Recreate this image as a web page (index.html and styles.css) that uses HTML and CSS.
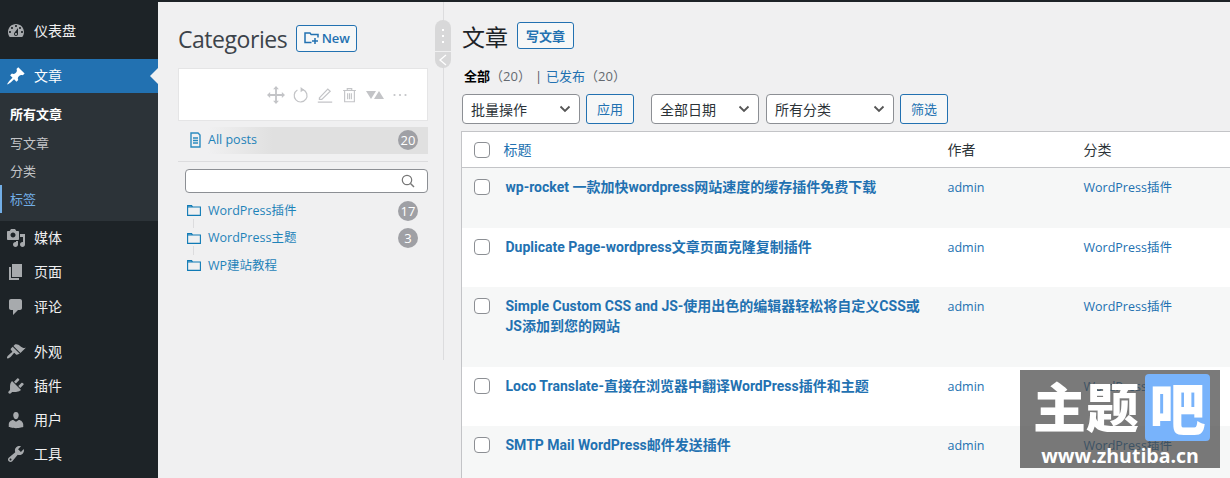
FILE: index.html
```html
<!DOCTYPE html>
<html lang="zh-CN">
<head>
<meta charset="utf-8">
<title>文章</title>
<link rel="stylesheet" href="styles.css">
</head>
<body>
<div class="layout">
  <nav class="sidebar">
    <a class="menu-item"><svg class="mi" viewBox="0 0 20 20"><path d="M3.76 16h12.48c1.1-1.37 1.76-3.11 1.76-5 0-4.42-3.58-8-8-8s-8 3.58-8 8c0 1.89.66 3.63 1.76 5zM10 4c.55 0 1 .45 1 1s-.45 1-1 1-1-.45-1-1 .45-1 1-1zM6 6c.55 0 1 .45 1 1s-.45 1-1 1-1-.45-1-1 .45-1 1-1zm8 0c.55 0 1 .45 1 1s-.45 1-1 1-1-.45-1-1 .45-1 1-1zm-5.37 5.55L12 7v6c0 1.1-.9 2-2 2s-2-.9-2-2c0-.57.24-1.08.63-1.45zM4 10c.55 0 1 .45 1 1s-.45 1-1 1-1-.45-1-1 .45-1 1-1zm12 0c.55 0 1 .45 1 1s-.45 1-1 1-1-.45-1-1 .45-1 1-1zm-5 3c0-.55-.45-1-1-1s-1 .45-1 1 .45 1 1 1 1-.45 1-1z"/></svg>仪表盘</a>
    <a class="menu-item active gap"><svg class="mi" viewBox="0 0 20 20"><path d="M10.44 3.02l1.82-1.82 6.36 6.35-1.83 1.82c-1.05-.68-2.48-.57-3.41.36l-.75.75c-.92.93-1.04 2.35-.35 3.41l-1.83 1.82-2.41-2.41-2.8 2.79c-.42.42-3.38 2.71-3.8 2.29s1.86-3.39 2.28-3.81l2.79-2.79L4.1 9.36l1.83-1.82c1.05.69 2.48.57 3.4-.36l.75-.75c.93-.92 1.05-2.35.36-3.41z"/></svg>文章</a>
    <ul class="submenu">
      <li class="sub-current">所有文章</li>
      <li>写文章</li>
      <li>分类</li>
      <li class="sub-marked">标签</li>
    </ul>
    <a class="menu-item"><svg class="mi" viewBox="0 0 20 20"><path d="M13 11V4c0-.55-.45-1-1-1h-1.67L9 1H5L3.67 3H2c-.55 0-1 .45-1 1v7c0 .55.45 1 1 1h10c.55 0 1-.45 1-1zM7 4.5c1.38 0 2.5 1.12 2.5 2.5S8.38 9.5 7 9.5 4.5 8.38 4.5 7 5.62 4.5 7 4.5zM14 6h5v10.5c0 1.38-1.12 2.5-2.5 2.5S14 17.88 14 16.5s1.12-2.5 2.5-2.5c.17 0 .34.02.5.05V9h-3V6zm-4 8.05V13h2v3.5c0 1.38-1.12 2.5-2.5 2.5S7 17.88 7 16.5 8.12 14 9.5 14c.17 0 .34.02.5.05z"/></svg>媒体</a>
    <a class="menu-item"><svg class="mi" viewBox="0 0 20 20"><path d="M6 15V2h10v13H6zm-1 1h8v2H3V5h2v11z"/></svg>页面</a>
    <a class="menu-item nudge"><svg class="mi" viewBox="0 0 20 20"><path d="M5 2h9c1.1 0 2 .9 2 2v7c0 1.1-.9 2-2 2h-2l-5 5v-5H5c-1.1 0-2-.9-2-2V4c0-1.1.9-2 2-2z"/></svg>评论</a>
    <a class="menu-item gap"><svg class="mi" viewBox="0 0 20 20"><path d="M14.48 11.06L7.41 3.99l1.5-1.5c.5-.56 2.3-.47 3.51.32 1.21.8 1.43 1.28 2.91 2.1 1.18.64 2.45 1.26 4.45.85zm-.71.71L6.7 4.7 4.93 6.47c-.39.39-.39 1.02 0 1.41l1.06 1.06c.39.39.39 1.03 0 1.42-.6.6-1.43 1.11-2.21 1.69-.35.26-.7.53-1.01.84C1.43 13.71.5 15.5 1.21 16.19c.7.71 2.48-.22 3.83-1.57.31-.31.58-.66.84-1.01.58-.78 1.09-1.61 1.69-2.21.39-.39 1.03-.39 1.42 0l1.06 1.06c.39.39 1.02.39 1.41 0z"/></svg>外观</a>
    <a class="menu-item"><svg class="mi" viewBox="0 0 20 20"><path d="M13.11 4.36L9.87 7.6 8 5.73l3.24-3.24c.35-.34 1.05-.2 1.56.32.52.51.66 1.21.31 1.55zm-8 1.77l.91-1.12 9.01 9.01-1.19.84c-.71.71-2.63 1.16-3.82 1.16H6.14L4.9 17.26c-.59.59-1.54.59-2.12 0-.59-.58-.59-1.53 0-2.12l1.24-1.24v-3.88c0-1.13.4-3.19 1.09-3.89zm7.26 3.97l3.24-3.24c.34-.35 1.04-.21 1.55.31.52.51.66 1.21.31 1.55l-3.24 3.25z"/></svg>插件</a>
    <a class="menu-item"><svg class="mi" viewBox="0 0 20 20"><path d="M10 9.25c-2.27 0-2.73-3.44-2.73-3.44C7 4.02 7.82 2 9.97 2c2.16 0 2.98 2.02 2.71 3.81 0 0-.41 3.44-2.68 3.44zm0 2.57L12.72 10c2.39 0 4.52 2.33 4.52 4.53v2.49s-3.65 1.13-7.24 1.13c-3.65 0-7.24-1.13-7.24-1.13v-2.49c0-2.25 1.94-4.48 4.47-4.48z"/></svg>用户</a>
    <a class="menu-item"><svg class="mi" viewBox="0 0 20 20"><path d="M16.68 9.77c-1.34 1.34-3.3 1.67-4.95.99l-5.41 6.52c-.99.99-2.59.99-3.58 0s-.99-2.59 0-3.57l6.52-5.42c-.68-1.65-.35-3.61.99-4.95 1.28-1.28 3.12-1.62 4.72-1.06l-2.89 2.89 2.82 2.82 2.86-2.87c.53 1.58.18 3.39-1.08 4.65zM3.81 16.21c.4.39 1.04.39 1.43 0 .4-.4.4-1.04 0-1.43-.39-.4-1.03-.4-1.43 0-.39.39-.39 1.03 0 1.43z"/></svg>工具</a>
  </nav>

  <aside class="cats">
    <div class="cats-head">
      <h2 class="cats-title">Categories</h2>
      <a class="btn btn-new"><svg class="new-icon" viewBox="0 0 16 16"><path d="M7.500 12.500H1V3h5l1.200 1.600H14v3" fill="none" stroke="currentColor" stroke-width="1.500"/><path d="M11 8v6M8 11h6" fill="none" stroke="currentColor" stroke-width="1.500"/></svg>New</a>
    </div>
    <div class="toolbar">
      <svg class="tool t-move" viewBox="0 0 20 20"><path d="M10 0l3.200 3.500H11V9h5.500V6.800L20 10l-3.500 3.200V11H11v5.500h2.200L10 20l-3.200-3.500H9V11H3.500v2.200L0 10l3.500-3.200V9H9V3.500H6.800z"/></svg>
      <svg class="tool t-16" viewBox="0 0 20 20"><path class="line" d="M12.500 3.300A8 8 0 1 1 5.500 3.800"/><path d="M9.500 0l4.500 3.500-4.500 3z"/></svg>
      <svg class="tool t-16" viewBox="0 0 20 20"><path class="line" d="M3 13.500L13.500 2.500l3 2.800L6 15.500H3zM1 19h18"/></svg>
      <svg class="tool t-trash" viewBox="0 0 20 20"><path class="line" d="M1.500 4h17M7 4V1.500h6V4M3.500 4v15h13V4M7.500 7.500v8M10 7.500v8M12.500 7.500v8"/></svg>
      <svg class="tool t-arrows" viewBox="0 0 18 8"><path d="M0 0h10L5 8zM8 8l5-8 5 8z"/></svg>
      <svg class="tool t-dots" viewBox="0 0 14 4"><circle cx="1.500" cy="2" r="1.100"/><circle cx="7" cy="2" r="1.100"/><circle cx="12.500" cy="2" r="1.100"/></svg>
    </div>
    <div class="all-posts">
      <svg class="doc-icon" viewBox="0 0 12 16"><path d="M3 1h6l2 2v12H2V1zM4 6h5M4 8.500h5M4 11h5" fill="none" stroke="currentColor" stroke-width="1.400"/></svg>
      <span class="cat-name">All posts</span>
      <span class="badge">20</span>
    </div>
    <hr class="cats-rule">
    <div class="search">
      <svg class="search-icon" viewBox="0 0 14 14"><circle cx="6" cy="6" r="4.700" fill="none" stroke="#777" stroke-width="1.200"/><path d="M9.500 9.500L13 13" stroke="#777" stroke-width="1.400"/></svg>
    </div>
    <ul class="tree">
      <li class="tree-row"><svg class="folder" viewBox="0 0 14 11"><path d="M.6 10.400V.6h4l1 1.400h7.800v8.400zM.6 2h5" fill="none" stroke="currentColor" stroke-width="1.100"/></svg><span class="cat-name">WordPress插件</span><span class="badge">17</span></li>
      <li class="tree-row"><svg class="folder" viewBox="0 0 14 11"><path d="M.6 10.400V.6h4l1 1.400h7.800v8.400zM.6 2h5" fill="none" stroke="currentColor" stroke-width="1.100"/></svg><span class="cat-name">WordPress主题</span><span class="badge">3</span></li>
      <li class="tree-row"><svg class="folder" viewBox="0 0 14 11"><path d="M.6 10.400V.6h4l1 1.400h7.800v8.400zM.6 2h5" fill="none" stroke="currentColor" stroke-width="1.100"/></svg><span class="cat-name">WP建站教程</span></li>
    </ul>
    <div class="grip">
      <span class="grip-dots"><i></i><i></i><i></i></span>
      <span class="grip-arrow"><svg viewBox="0 0 10 12" width="10" height="12"><path d="M8 1L2 6l6 5" fill="none" stroke="#fff" stroke-width="1.300"/></svg></span>
    </div>
  </aside>

  <main class="main">
    <div class="head">
      <h1 class="title">文章</h1>
      <a class="btn btn-add">写文章</a>
    </div>
    <div class="views"><b>全部</b><span class="count">（20）</span><span class="sep">|</span><a class="link">已发布</a><span class="count">（20）</span></div>
    <div class="filters">
      <select class="sel sel-bulk"><option>批量操作</option></select>
      <a class="btn btn-act">应用</a>
      <select class="sel sel-date"><option>全部日期</option></select>
      <select class="sel sel-cat"><option>所有分类</option></select>
      <a class="btn btn-act">筛选</a>
    </div>
    <table class="posts">
      <colgroup><col class="c-check"><col class="c-title"><col class="c-author"><col class="c-cat"></colgroup>
      <thead>
        <tr><th><input class="check" type="checkbox"></th><th class="th-title">标题</th><th class="th-dark">作者</th><th class="th-dark">分类</th></tr>
      </thead>
      <tbody>
        <tr class="alt"><td><input class="check" type="checkbox"></td><td class="post-title">wp-rocket 一款加快wordpress网站速度的缓存插件免费下载</td><td class="cell-link">admin</td><td class="cell-link">WordPress插件</td></tr>
        <tr><td><input class="check" type="checkbox"></td><td class="post-title">Duplicate Page-wordpress文章页面克隆复制插件</td><td class="cell-link">admin</td><td class="cell-link">WordPress插件</td></tr>
        <tr class="alt"><td><input class="check" type="checkbox"></td><td class="post-title">Simple Custom CSS and JS-使用出色的编辑器轻松将自定义CSS或JS添加到您的网站</td><td class="cell-link">admin</td><td class="cell-link">WordPress插件</td></tr>
        <tr><td><input class="check" type="checkbox"></td><td class="post-title">Loco Translate-直接在浏览器中翻译WordPress插件和主题</td><td class="cell-link">admin</td><td class="cell-link">WordPress插件</td></tr>
        <tr class="alt"><td><input class="check" type="checkbox"></td><td class="post-title">SMTP Mail WordPress邮件发送插件</td><td class="cell-link">admin</td><td class="cell-link">WordPress插件</td></tr>
      </tbody>
    </table>
  </main>
</div>
<div class="watermark">
  <div class="wm-top"><span class="wm-zh">主题</span><span class="wm-ba">吧</span></div>
  <div class="wm-url">www.zhutiba.cn</div>
</div>
</body>
</html>
```
FILE: styles.css
```css
* { box-sizing: border-box; }
html, body { margin: 0; height: 478px; overflow: hidden; }
body {
  position: relative;
  background: #f0f0f1;
  border-top: 2px solid #1d2327;
  font: 13px/20px "Open Sans", "Noto Sans CJK SC", sans-serif;
  color: #3c434a;
}
ul { list-style: none; margin: 0; padding: 0; }
.layout { display: grid; grid-template-columns: 158px 286px 1fr; height: 476px; }

/* sidebar */
.sidebar { background: #1d2327; padding-top: 12px; color: #f0f0f1; font-size: 14px; }
.menu-item { display: flex; align-items: center; height: 34px; position: relative; color: #f0f0f1; }
.menu-item.gap { margin-top: 11px; }
.menu-item.nudge { margin-top: 1px; }
.mi { width: 20px; height: 20px; margin: 0 8px 0 6px; fill: #a7aaad; flex: none; }
.active { background: #2271b1; color: #fff; }
.active .mi { fill: #fff; }
.active::after {
  content: ""; position: absolute; right: 0; top: 9px;
  border: 8px solid transparent; border-right-color: #f0f0f1; border-left-width: 0;
}
.submenu { background: #2c3338; height: 128px; padding-top: 7px; font-size: 13px; color: #c3c4c7; }
.submenu li { height: 28px; line-height: 28px; padding-left: 10px; }
.submenu li.sub-current { color: #fff; font-weight: 700; height: 29px; }
.submenu li.sub-marked { color: #72aee6; border-left: 2px solid #72aee6; padding-left: 8px; }

/* categories panel */
.cats { position: relative; border-right: 1px solid #dcdcde; height: 358px; padding: 0 15px 0 20px; }
.cats-head { display: flex; align-items: center; height: 66px; padding-top: 6px; }
.cats-title { margin: 2px 9px 0 0; font-size: 23px; font-weight: 400; line-height: 30px; color: #3c434a; font-family: "Open Sans", sans-serif; letter-spacing: -.45px; }
.btn {
  display: inline-flex; align-items: center; justify-content: center;
  border: 1px solid #2271b1; border-radius: 3px; color: #2271b1; background: #f6f7f7;
}
.btn-new { width: 61px; height: 27px; font-size: 13px; font-weight: 600; }
.new-icon { width: 16px; height: 16px; margin-right: 2px; }
.toolbar {
  display: flex; align-items: center; justify-content: flex-end; gap: 8px;
  height: 53px; background: #fff; border: 1px solid #e5e5e6; padding-right: 20px;
}
.tool { fill: #c3c4c7; flex: none; }
.tool .line { fill: none; stroke: #c3c4c7; stroke-width: 1.500; }
.t-move { width: 18px; height: 18px; }
.t-16 { width: 16px; height: 18px; }
.t-trash { width: 15px; height: 16px; margin-left: 1px; }
.t-arrows { width: 18px; height: 8px; margin-left: 1px; }
.t-dots { width: 14px; height: 4px; margin-left: 1px; }
.all-posts {
  display: flex; align-items: center; height: 27px; margin-top: 6px; padding: 0 10px 1px 11px;
  background: linear-gradient(to right, rgba(224,224,224,0) 12%, #e0e0e0 38%);
  color: #2a8abf;
}
.doc-icon { width: 12px; height: 16px; margin-right: 7px; flex: none; }
.cat-name { flex: 1; font-size: 12.500px; color: #1f83b9; }
.badge {
  flex: none; width: 20px; height: 20px; border-radius: 50%;
  background: #9fa0a5; color: #fff; font-size: 13px; line-height: 20px; text-align: center;
}
.cats-rule { border: 0; border-top: 1px solid #dcdcde; margin: 7px 0 7px; }
.search {
  display: flex; align-items: center; justify-content: flex-end;
  margin-left: 7px; height: 24px; background: #fff; border: 1px solid #8c8f94; border-radius: 4px; padding-right: 12px;
}
.search-icon { width: 14px; height: 14px; }
.tree { margin-top: 4px; }
.tree-row { position: relative; display: flex; align-items: center; height: 27.500px; padding: 0 10px 0 9px; color: #0f7ab5; }
.tree-row + .tree-row::before {
  content: ""; position: absolute; left: 15px; top: -6px; width: 1px; height: 9px; background: #dcdcde;
}
.folder { width: 14px; height: 11px; margin-right: 7px; flex: none; }
.grip {
  position: absolute; right: -8px; top: 18px; width: 16px; height: 48px; border-radius: 8px;
  background: #d8d8d9; display: flex; flex-direction: column; overflow: hidden;
}
.grip-dots { flex: 1; display: flex; flex-direction: column; align-items: center; justify-content: center; gap: 4px; }
.grip-dots i { width: 2px; height: 2px; background: #fff; }
.grip-arrow { height: 17px; border-top: 1px solid #f0f0f1; display: flex; align-items: center; justify-content: center; }

/* main */
.main { padding: 0 0 0 17px; min-width: 0; overflow: hidden; position: relative; }
.head { display: flex; align-items: center; height: 41px; margin-top: 13px; }
.title { margin: 0 9px 0 1px; padding-top: 2px; font-size: 23px; font-weight: 400; color: #1d2327; line-height: 30px; }
.btn-add { width: 57px; height: 27px; font-size: 13px; font-weight: 600; }
.views { display: flex; align-items: center; height: 20px; margin: 10px 0 0 3px; font-size: 13px; color: #50575e; }
.views b { color: #000; font-weight: 700; }
.count { color: #646970; }
.sep { margin: 0 4px 0 4px; color: #50575e; }
.link { color: #2271b1; }
.filters { display: flex; align-items: center; height: 30px; margin-top: 8px; gap: 6px; margin-left: 1px; }
.sel {
  appearance: none; -webkit-appearance: none;
  height: 30px; border: 1px solid #8c8f94; border-radius: 4px; padding: 0 8px;
  font: 14px "Open Sans", "Noto Sans CJK SC", sans-serif; color: #2c3338;
  background: #fff url("data:image/svg+xml;utf8,<svg xmlns='http://www.w3.org/2000/svg' width='12' height='8' viewBox='0 0 12 8'><path d='M1.500 1.500L6 6l4.500-4.500' fill='none' stroke='%23555' stroke-width='1.800'/></svg>") no-repeat right 8px center;
}
.sel-bulk { width: 118px; }
.sel-date { width: 108px; margin-left: 11px; }
.sel-cat { width: 128px; margin-left: 1px; }
.btn-act { width: 48px; height: 30px; font-size: 13px; }
.posts {
  table-layout: fixed; width: 770px; margin-top: 7px;
  border-collapse: collapse; border-top: 1px solid #c3c4c7; border-left: 1px solid #c3c4c7;
  background: #fff;
}
.c-check { width: 36px; } .c-title { width: 442px; } .c-author { width: 136px; } .c-cat { width: 156px; }
.posts th { height: 36px; padding: 0 8px; text-align: left; font-weight: 400; font-size: 14px; border-bottom: 1px solid #c3c4c7; }
.posts .th-title { color: #2271b1; padding-left: 6px; }
.th-dark { color: #2c3338; }
.posts td { padding: 9px 8px 30.500px; vertical-align: top; font-size: 12.500px; line-height: 20px; }
.alt { background: #f6f7f7; }
.posts .post-title { color: #2271b1; font-family: Roboto, "Noto Sans CJK SC", sans-serif; font-weight: 700; font-size: 14px; }
.posts .cell-link { color: #2271b1; padding-top: 10px; padding-bottom: 29.500px; }
.check {
  appearance: none; -webkit-appearance: none; display: block;
  width: 16px; height: 16px; margin: 2px 0 0 4px; background: #fff;
  border: 1px solid #8c8f94; border-radius: 4px;
}
th .check { margin-top: 0; }

/* watermark */
.watermark {
  position: absolute; left: 1020px; top: 368px; width: 200px; height: 98px;
  background: rgba(70, 70, 70, .72); color: #fff; overflow: hidden;
}
.wm-top { display: flex; height: 74px; padding: 4px 10px 0 13px; justify-content: space-between; }
.wm-zh { font: 900 53px/62px "Noto Sans CJK SC", sans-serif; white-space: nowrap; flex: none; }
.wm-ba {
  flex: none; width: 65px; height: 67px; border-radius: 4px; background: #78b3fb;
  font: 900 56px/64px "Noto Sans CJK SC", sans-serif; text-align: center;
}
.wm-url { font: 700 19.500px/24px "Open Sans", sans-serif; text-align: center; white-space: nowrap; }
```
